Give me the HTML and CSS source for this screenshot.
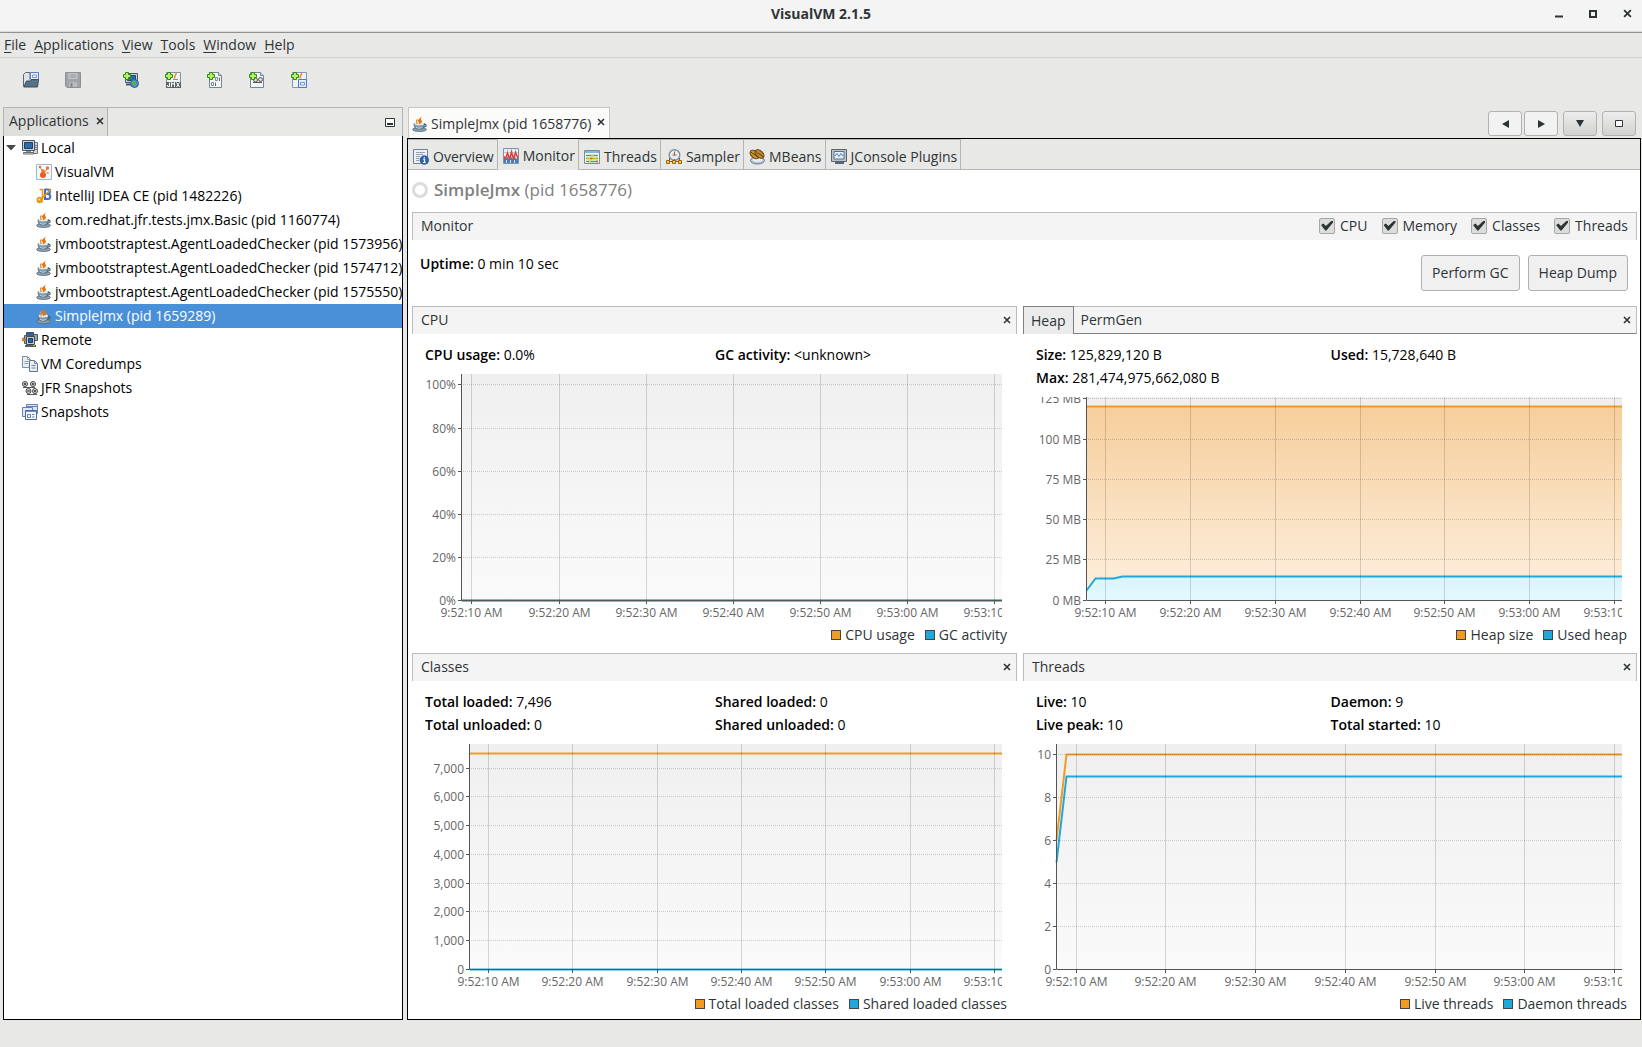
FILE: index.html
```html
<!DOCTYPE html>
<html lang="en">
<head>
<meta charset="utf-8">
<title>VisualVM 2.1.5</title>
<link rel="stylesheet" href="styles.css">
</head>
<body>
<svg class="sprite" aria-hidden="true">
  <symbol id="i-java" viewBox="0 0 16 16">
    <ellipse cx="7.500" cy="13.500" rx="7" ry="2" fill="#8fa3b1" stroke="#4d6272" stroke-width=".7"/>
    <path d="M2 7.500h10.500c0 3.500-1.500 5.500-3.200 5.500H5.200C3.500 13 2 11 2 7.500z" fill="#7f97a8" stroke="#4a5f6f" stroke-width=".8"/>
    <path d="M12 8.500c3-.8 3 2.600-.8 2.700" fill="none" stroke="#4a5f6f" stroke-width="1.200"/>
    <ellipse cx="7.200" cy="8" rx="4.900" ry="1.400" fill="#dfe8ee"/>
    <path d="M4 11c1 1.500 4 1.500 5.500.5" fill="none" stroke="#c9d8e2"/>
    <path d="M9.200 0c.6 2-3.700 3-3.200 5 .3 1 1.500 1.500 1 3.300C10.500 7 10.500 4.700 9 3.700 8.500 2.700 10 1.500 9.200 0z" fill="#e87410"/>
    <path d="M5.500 3.500C3.500 5 4.500 6.500 5.500 8" fill="none" stroke="#f08a2a" stroke-width="1.300"/>
  </symbol>
  <symbol id="i-plus" viewBox="0 0 16 16">
    <path d="M2.500.5h3v2h2v3h-2v2h-3v-2h-2v-3h2z" fill="#b4f06c" stroke="#2f8a10"/>
  </symbol>
  <symbol id="i-open" viewBox="0 0 16 16">
    <path d="M.500 14V2.500l2-2h4.500v7" fill="#dde1e5" stroke="#5b6873"/>
    <path d="M7.500.5h8v7h-8z" fill="#e8f0ff" stroke="#5a7fc4"/><path d="M9.500 3h4v2.500h-4z" fill="#fff" stroke="#6f93d6"/>
    <path d="M.700 15 3.500 9h4l1-1.500h7L14.500 15z" fill="#56728a" stroke="#3a4e60"/>
  </symbol>
  <symbol id="i-save" viewBox="0 0 16 16">
    <path d="M.5.500h15v15H2L.500 14z" fill="#a2a3a7" stroke="#8f9095"/>
    <path d="M3.500 1h9v6h-9z" fill="#c3c4c8"/><path d="M5 3h6M5 5h6" stroke="#96979c"/><path d="M4 10h8v5H4z" fill="#b9babd"/><path d="M5.500 11h2v4h-2z" fill="#85868a"/>
  </symbol>
  <symbol id="i-host" viewBox="0 0 16 16">
    <path d="M2.500 1.500h12v9h-12z" fill="#c7d0d6" stroke="#4b5861"/><path d="M4.500 3.500h8v5h-8z" fill="#2d6b9f" stroke="#1d4a74"/>
    <path d="M3 12.500h7" stroke="#4b5861" stroke-width="2"/>
    <circle cx="11.500" cy="11.500" r="4" fill="#4b8ad0" stroke="#2c5f96"/><path d="M10 8.500l3 1-1 2 1.500 1.500-2 1.500-1-2.500-2-1z" fill="#5cb53c"/>
    <use href="#i-plus"/>
  </symbol>
  <symbol id="i-jmx" viewBox="0 0 16 16">
    <path d="M1.500.5h14v15h-14z" fill="#eef2f5" stroke="#8496a6"/><path d="M11 1c1 2-3 3-1 5.500" fill="none" stroke="#ee8a1a" stroke-width="1.500"/><path d="M8 7.500h5" stroke="#7f95a6"/>
    <path d="M1 10h15v6H1z" fill="#5c6166"/>
    <path d="M4.500 10.500v4h-2V13M6.500 15v-4.500l1.500 2 1.500-2V15M11.500 10.500l3 4.500M14.500 10.500l-3 4.500" fill="none" stroke="#fff"/>
    <use href="#i-plus"/>
  </symbol>
  <symbol id="i-core" viewBox="0 0 16 16">
    <path d="M2.500.5h9l3 3v12h-12z" fill="#f3f5f7" stroke="#74879a"/><path d="M11.500.5v3h3" fill="#cdd7e0" stroke="#74879a"/>
    <path d="M8.500 10.500v3.500M12.500 5.500v3.500" stroke="#5c6a76"/><path d="M4.500 10.500h2v3h-2zM8.500 5.500h2v3h-2z" fill="none" stroke="#7d8b98"/>
    <use href="#i-plus"/>
  </symbol>
  <symbol id="i-jfr" viewBox="0 0 16 16">
    <path d="M1.500.5h10l3 3v12h-13z" fill="#f3f5f7" stroke="#74879a"/><path d="M11.500.5v3h3" fill="#cdd7e0" stroke="#74879a"/>
    <circle cx="6.500" cy="8" r="2" fill="#ddd" stroke="#555"/><circle cx="11.500" cy="7.500" r="2" fill="#ddd" stroke="#555"/><path d="M4 10.500h9" stroke="#555"/>
    <use href="#i-plus"/>
  </symbol>
  <symbol id="i-snapadd" viewBox="0 0 16 16">
    <path d="M1.500.5h14v15h-14z" fill="#eef2f7" stroke="#8496b6"/><path d="M10.500 1c1 2-3 3-1 5.500" fill="none" stroke="#ee8a1a" stroke-width="1.500"/>
    <path d="M7.500 7.500h8v8h-8z" fill="#e6efff" stroke="#4f79c6"/><path d="M9.500 10.500h4v2.500h-4z" fill="#fff" stroke="#6f93d6"/>
    <use href="#i-plus"/>
  </symbol>
  <symbol id="i-local" viewBox="0 0 16 16">
    <path d="M11.500 2.500h4v11h-4z" fill="#d9dcde" stroke="#6d7479"/><path d="M13 5.500h2M13 7.500h2M13 9.500h2" stroke="#777"/>
    <path d="M.5.500h12v10H.5z" fill="#cfd4d8" stroke="#4b5359"/><path d="M2.500 2.500h8v6h-8z" fill="#2c6ca8" stroke="#173f69"/>
    <path d="M4 11h5v2H4z" fill="#8b9399"/><path d="M1.500 12.500h10v1.500h-10z" fill="#e5e7e8" stroke="#666d72"/>
  </symbol>
  <symbol id="i-vvm" viewBox="0 0 16 16">
    <path d="M.5.500h15v15H.500z" fill="#f4f8fb" stroke="#9bb8cd"/>
    <circle cx="4" cy="3" r="1.300" fill="#f2702a"/><circle cx="11.500" cy="4" r="1.700" fill="#f2702a"/><circle cx="7" cy="11" r="3" fill="#ee5a1c"/><circle cx="7" cy="7" r="1.800" fill="#f2702a"/>
    <path d="M4.500 4 8 9l3-4" fill="none" stroke="#f2702a"/><path d="M10 8.500l2.500 1" stroke="#f7a070"/><circle cx="12" cy="9" r=".9" fill="#f7a070"/>
  </symbol>
  <symbol id="i-idea" viewBox="0 0 16 16">
    <path d="M8.500 1.500h3.500c2.500 0 2.500 4.500 0 4.500 3 0 3 5 0 5H8.500M8.500 6h4" fill="none" stroke="#4070c4" stroke-width="2"/><path d="M9 1v11" stroke="#4070c4" stroke-width="2"/>
    <path d="M3.500 1.500h3v10M15 1 2 14.500" fill="none" stroke="#e8960c" stroke-width="1.500"/><circle cx="3.800" cy="12" r="2.300" fill="none" stroke="#e8960c" stroke-width="1.800"/>
  </symbol>
  <symbol id="i-remote" viewBox="0 0 16 16">
    <path d="M4.500.500h7v4h-7z" fill="#2d659d" stroke="#474f57"/><path d="M11.500 2.500h4v6h-4zM2.500 3.500h3v8h-3z" fill="#9da5ab" stroke="#51595f"/>
    <path d="M4.500 4.500h8v8h-8z" fill="#c6ccd0" stroke="#424a50"/><path d="M6.500 6.500h4v4h-4z" fill="#2468a6" stroke="#123d68"/>
    <path d="M3 14h11" stroke="#565e64" stroke-width="2"/><path d="M11 13.500h2" stroke="#7ed321"/><circle cx="1.700" cy="7.500" r="1.500" fill="#e09620" stroke="#80500a" stroke-width=".7"/>
  </symbol>
  <symbol id="i-dumps" viewBox="0 0 16 16">
    <path d="M.5.500h5l3 3v8h-8z" fill="#e6edf3" stroke="#7d90a2"/><path d="M5.500.500v3h3M2.500 5.500h4M2.500 7.500h4" fill="none" stroke="#8ea1b2"/>
    <path d="M7.500 4.500h5l3 3v8h-8z" fill="#e6edf3" stroke="#60758a"/><path d="M12.500 4.500v3h3M9.500 9.500h4M9.500 12h4" fill="none" stroke="#75899b"/>
  </symbol>
  <symbol id="i-reels" viewBox="0 0 16 16">
    <g fill="#d6d6d6" stroke="#444"><circle cx="3" cy="4" r="2.500"/><circle cx="11" cy="4" r="2.500"/><circle cx="6.500" cy="11" r="2.500"/><circle cx="13" cy="11" r="2.500"/></g>
    <path d="M2 3l2 2M4 3 2 5M10 3l2 2M12 3l-2 2M5.500 10l2 2M7.500 10l-2 2M12 10l2 2M14 10l-2 2M1 7.500h12M5 14.500h10" stroke="#444" stroke-width=".9"/>
  </symbol>
  <symbol id="i-snaps" viewBox="0 0 16 16">
    <path d="M4.500.500h11v9h-11z" fill="#dfe8fa" stroke="#6480b8"/><path d="M5 2.500h10" stroke="#6480b8"/><path d="M.5 3.500h10v9H.500z" fill="#dfe8fa" stroke="#6480b8"/>
    <path d="M3.500 6.500h11v9h-11z" fill="#f3f7ff" stroke="#4c69a4"/><path d="M4 7.500h10" stroke="#6f8fce"/><path d="M5.500 10.500h3v3h-3zM10 10.500h2.500M10 13h2.500" fill="none" stroke="#6480b8"/>
  </symbol>
  <symbol id="i-overview" viewBox="0 0 16 16">
    <path d="M.5.500h14v14H.500z" fill="#edf1f5" stroke="#6f8192"/><path d="M3 3.500h9M3 5.500h7M3 7.500h4M3 9.500h3M3 11.500h3" stroke="#8fa0af"/>
    <circle cx="11.300" cy="11" r="4.300" fill="#2f62b4" stroke="#1e4488" stroke-width=".7"/><path d="M11.300 8v1.400M10.300 10.500h1.200v3M10 13.500h2.700" stroke="#fff" stroke-width="1.200" fill="none"/>
  </symbol>
  <symbol id="i-monitor" viewBox="0 0 16 16">
    <path d="M.5.500h15v15H.500z" fill="#e4eff8" stroke="#8094a5"/><path d="M4.500 1v14M8.500 1v14M12.500 1v14M1 4.500h14" stroke="#b5ccdd"/>
    <path d="M1 9l2 2 1.500-2L6 11l2-2 2 2 1.500-2L13 11l2-2v6H1z" fill="#3f7fc8"/>
    <path d="M1 8.500l1.500 2.500 2-6 2 6L8.500 4l2 7 2-6.500L15 10" fill="none" stroke="#e2402f" stroke-width="1.500"/>
    <path d="M3.500 12v3M7.500 12v3M11.500 12v3" stroke="#cfe2f3"/>
  </symbol>
  <symbol id="i-threads" viewBox="0 0 16 16">
    <path d="M.5 1.500h15v13H.500z" fill="#f6fafc" stroke="#77899a"/><path d="M1 3h14" stroke="#80b6dd" stroke-width="2"/>
    <path d="M2 6.500h12M2 9.500h12M2 12.500h12" stroke="#55a845" stroke-width="1.500"/><path d="M7 6.500h3M3 9.500h3M9 9.500h4M5 12.500h2" stroke="#f0b030" stroke-width="1.500"/><path d="M6 9.500h2M12 12.500h2" stroke="#e0562e" stroke-width="1.500"/>
  </symbol>
  <symbol id="i-sampler" viewBox="0 0 16 16">
    <circle cx="8.500" cy="6" r="5.300" fill="#e3eef8" stroke="#7d8fa0" stroke-width="1.400"/><path d="M8.500 2.500v4M6.500 6h4" fill="none" stroke="#c4571b"/>
    <path d="M2 12.500h13M8.500 10v2M3.500 9v3M13.500 9v3" stroke="#8a5d12"/><path d="M.5 11.500h3v3h-3zM6.500 11.500h3v3h-3zM12.500 11.500h3v3h-3z" fill="#ffca4a" stroke="#9a6510"/>
  </symbol>
  <symbol id="i-mbeans" viewBox="0 0 16 16">
    <ellipse cx="8.500" cy="11.500" rx="7" ry="3.500" fill="#b9c7d2" stroke="#66798a"/><ellipse cx="8.500" cy="10.800" rx="5" ry="2" fill="#e9eff3"/>
    <ellipse cx="5.500" cy="5.500" rx="3.300" ry="5.200" transform="rotate(-48 5.500 5.500)" fill="#c89434" stroke="#5a3c0c"/><ellipse cx="10.500" cy="5" rx="3.300" ry="5.200" transform="rotate(-48 10.500 5)" fill="#c08a2a" stroke="#5a3c0c"/>
    <path d="M2 3c2 3 5 2 7 5.500M7 2.500c2 3 5 2 7 5.500" fill="none" stroke="#5a3c0c"/>
  </symbol>
  <symbol id="i-console" viewBox="0 0 16 16">
    <path d="M.5.500h15v12H.500z" fill="#b8c2ca" stroke="#58656f"/><path d="M3 2.500h10v7.500H3z" fill="#e3f0f8" stroke="#60717e"/><path d="M4 7l2-2.500L8 7.500l2-3 2 2.500" fill="none" stroke="#4d83b4"/>
    <path d="M4 14h9" stroke="#58656f" stroke-width="2"/>
  </symbol>
  <symbol id="i-close" viewBox="0 0 8 8"><path d="M1 1l6 6M7 1 1 7" stroke="currentColor" stroke-width="1.600"/></symbol>
</svg>

<header class="titlebar">
  <h1 class="titlebar-text">VisualVM 2.1.5</h1>
  <div class="window-controls">
    <button type="button" aria-label="Minimize"><svg width="8" height="8"><path d="M0 6.500h8" stroke="currentColor" stroke-width="2"/></svg></button>
    <button type="button" aria-label="Maximize"><svg width="8" height="8"><path d="M1 1h6v6H1z" fill="none" stroke="currentColor" stroke-width="2"/></svg></button>
    <button type="button" aria-label="Close"><svg width="9" height="9"><use href="#i-close"/></svg></button>
  </div>
</header>

<nav class="menubar" aria-label="Main menu">
  <a href="#file"><u>F</u>ile</a>
  <a href="#applications"><u>A</u>pplications</a>
  <a href="#view"><u>V</u>iew</a>
  <a href="#tools"><u>T</u>ools</a>
  <a href="#window"><u>W</u>indow</a>
  <a href="#help"><u>H</u>elp</a>
</nav>

<div class="toolbar">
  <div class="toolgroup">
    <button type="button" aria-label="Open file"><svg class="icon"><use href="#i-open"/></svg></button>
    <button type="button" aria-label="Save" disabled><svg class="icon"><use href="#i-save"/></svg></button>
  </div>
  <div class="toolgroup">
    <button type="button" aria-label="Add remote host"><svg class="icon"><use href="#i-host"/></svg></button>
    <button type="button" aria-label="Add JMX connection"><svg class="icon"><use href="#i-jmx"/></svg></button>
    <button type="button" aria-label="Add VM coredump"><svg class="icon"><use href="#i-core"/></svg></button>
    <button type="button" aria-label="Add JFR snapshot"><svg class="icon"><use href="#i-jfr"/></svg></button>
    <button type="button" aria-label="Add snapshot"><svg class="icon"><use href="#i-snapadd"/></svg></button>
  </div>
</div>

<div class="workspace">
  <aside class="sidebar">
    <div class="side-head">
      <div class="side-tab">Applications <button type="button" class="close" aria-label="Close Applications"><svg><use href="#i-close"/></svg></button></div>
      <button type="button" class="minimize" aria-label="Minimize window group"><svg width="10" height="9"><path d="M.5.500h9v8h-9z" fill="#fff" stroke="currentColor"/><path d="M2 6h6" stroke="currentColor" stroke-width="2"/></svg></button>
    </div>
    <ul class="tree">
      <li><span class="row"><svg class="arrow" width="10" height="6"><path d="M0 0h10L5 5.500z" fill="#4a4a4a"/></svg><svg class="icon"><use href="#i-local"/></svg>Local</span>
        <ul>
          <li><span class="row"><svg class="icon"><use href="#i-vvm"/></svg>VisualVM</span></li>
          <li><span class="row"><svg class="icon"><use href="#i-idea"/></svg>IntelliJ IDEA CE (pid 1482226)</span></li>
          <li><span class="row"><svg class="icon"><use href="#i-java"/></svg>com.redhat.jfr.tests.jmx.Basic (pid 1160774)</span></li>
          <li><span class="row"><svg class="icon"><use href="#i-java"/></svg>jvmbootstraptest.AgentLoadedChecker (pid 1573956)</span></li>
          <li><span class="row"><svg class="icon"><use href="#i-java"/></svg>jvmbootstraptest.AgentLoadedChecker (pid 1574712)</span></li>
          <li><span class="row"><svg class="icon"><use href="#i-java"/></svg>jvmbootstraptest.AgentLoadedChecker (pid 1575550)</span></li>
          <li><span class="row selected"><svg class="icon"><use href="#i-java"/></svg>SimpleJmx (pid 1659289)</span></li>
        </ul>
      </li>
      <li><span class="row"><svg class="icon"><use href="#i-remote"/></svg>Remote</span></li>
      <li><span class="row"><svg class="icon"><use href="#i-dumps"/></svg>VM Coredumps</span></li>
      <li><span class="row"><svg class="icon"><use href="#i-reels"/></svg>JFR Snapshots</span></li>
      <li><span class="row"><svg class="icon"><use href="#i-snaps"/></svg>Snapshots</span></li>
    </ul>
  </aside>

  <main class="document">
    <div class="doc-head">
      <div class="doc-tab"><svg class="icon"><use href="#i-java"/></svg>SimpleJmx (pid 1658776) <button type="button" class="close" aria-label="Close SimpleJmx"><svg><use href="#i-close"/></svg></button></div>
      <div class="doc-nav">
        <button type="button" class="flat" aria-label="Previous"><svg width="7" height="8"><path d="M7 0v8L0 4z" fill="currentColor"/></svg></button>
        <button type="button" class="flat" aria-label="Next"><svg width="7" height="8"><path d="M0 0v8l7-4z" fill="currentColor"/></svg></button>
        <button type="button" class="list" aria-label="Show opened documents"><svg width="8" height="7"><path d="M0 0h8L4 7z" fill="currentColor"/></svg></button>
        <button type="button" class="list" aria-label="Maximize window"><svg width="8" height="7"><path d="M.5.500h7v6h-7z" fill="#fff" stroke="currentColor"/></svg></button>
      </div>
    </div>

    <div class="doc-body">
      <nav class="views" aria-label="Views">
        <button type="button"><svg class="icon"><use href="#i-overview"/></svg>Overview</button>
        <button type="button" class="active"><svg class="icon"><use href="#i-monitor"/></svg>Monitor</button>
        <button type="button"><svg class="icon"><use href="#i-threads"/></svg>Threads</button>
        <button type="button"><svg class="icon"><use href="#i-sampler"/></svg>Sampler</button>
        <button type="button"><svg class="icon"><use href="#i-mbeans"/></svg>MBeans</button>
        <button type="button"><svg class="icon"><use href="#i-console"/></svg>JConsole Plugins</button>
      </nav>

      <h2 class="app-title"><span class="ring"></span><span><b>SimpleJmx</b> (pid 1658776)</span></h2>

      <div class="content">
        <div class="bar">
          <span class="bar-title">Monitor</span>
          <div class="checks">
            <label><input type="checkbox" checked>CPU</label>
            <label><input type="checkbox" checked>Memory</label>
            <label><input type="checkbox" checked>Classes</label>
            <label><input type="checkbox" checked>Threads</label>
          </div>
        </div>
        <div class="summary">
          <p class="uptime"><b>Uptime:</b> 0 min 10 sec</p>
          <div class="actions">
            <button type="button">Perform GC</button>
            <button type="button">Heap Dump</button>
          </div>
        </div>

        <div class="panels">
          <section class="panel">
            <div class="bar"><h3 class="bar-title">CPU</h3><button type="button" class="close" aria-label="Hide CPU"><svg><use href="#i-close"/></svg></button></div>
            <div class="stats"><span><b>CPU usage:</b> 0.0%</span><span><b>GC activity:</b> &lt;unknown&gt;</span></div>
            <svg class="chart" data-chart="cpu" role="img" aria-label="CPU usage and GC activity"></svg>
            <div class="legend"><span class="key orange">CPU usage</span><span class="key blue">GC activity</span></div>
          </section>
          <section class="panel">
            <div class="bar tabbed"><button type="button" class="mini-tab active">Heap</button><button type="button" class="mini-tab">PermGen</button><button type="button" class="close" aria-label="Hide Memory"><svg><use href="#i-close"/></svg></button></div>
            <div class="stats"><span><b>Size:</b> 125,829,120 B</span><span><b>Used:</b> 15,728,640 B</span><span><b>Max:</b> 281,474,975,662,080 B</span></div>
            <svg class="chart" data-chart="heap" role="img" aria-label="Heap size and used heap"></svg>
            <div class="legend"><span class="key orange">Heap size</span><span class="key blue">Used heap</span></div>
          </section>
          <section class="panel">
            <div class="bar"><h3 class="bar-title">Classes</h3><button type="button" class="close" aria-label="Hide Classes"><svg><use href="#i-close"/></svg></button></div>
            <div class="stats"><span><b>Total loaded:</b> 7,496</span><span><b>Shared loaded:</b> 0</span><span><b>Total unloaded:</b> 0</span><span><b>Shared unloaded:</b> 0</span></div>
            <svg class="chart" data-chart="classes" role="img" aria-label="Total and shared loaded classes"></svg>
            <div class="legend"><span class="key orange">Total loaded classes</span><span class="key blue">Shared loaded classes</span></div>
          </section>
          <section class="panel">
            <div class="bar"><h3 class="bar-title">Threads</h3><button type="button" class="close" aria-label="Hide Threads"><svg><use href="#i-close"/></svg></button></div>
            <div class="stats"><span><b>Live:</b> 10</span><span><b>Daemon:</b> 9</span><span><b>Live peak:</b> 10</span><span><b>Total started:</b> 10</span></div>
            <svg class="chart" data-chart="threads" role="img" aria-label="Live and daemon threads"></svg>
            <div class="legend"><span class="key orange">Live threads</span><span class="key blue">Daemon threads</span></div>
          </section>
        </div>
      </div>
    </div>
  </main>
</div>
<footer class="statusbar"></footer>
<script src="charts.js"></script>
</body>
</html>
```
FILE: styles.css
```css
*, *::before { box-sizing: border-box; }

body {
  margin: 0;
  min-height: 100vh;
  display: flex;
  flex-direction: column;
  background: #e8e8e6;
  color: #2e3436;
  font: 14px/20px "Open Sans", "Noto Sans", sans-serif;
}

h1, h2, h3, p, ul { margin: 0; padding: 0; font: inherit; }
ul { list-style: none; }
button {
  font: inherit;
  color: inherit;
  margin: 0;
  padding: 0;
  border: 0;
  background: none;
  display: inline-flex;
  align-items: center;
  justify-content: center;
}
b { font-weight: 600; }
svg { display: block; flex: none; }
.sprite { position: absolute; width: 0; height: 0; }
.icon { width: 16px; height: 16px; }
.close svg { width: 8px; height: 8px; }

/* Window frame */
.titlebar {
  display: grid;
  grid-template-columns: 1fr auto 1fr;
  align-items: center;
  height: 33px;
  padding-bottom: 5px;
  background: #f4f4f4;
  border-bottom: 1px solid #90908c;
  box-shadow: inset 0 -1px #dcdcda;
}
.titlebar-text { grid-column: 2; font-weight: 700; }
.window-controls { display: flex; justify-content: flex-end; gap: 26px; padding-right: 10px; }

.menubar {
  display: flex;
  gap: 8px;
  height: 25px;
  padding: 2px 4px;
  border-bottom: 1px solid #d0d0ce;
}
.menubar a { color: inherit; text-decoration: none; }
.menubar u { text-underline-offset: 2px; }

.toolbar { display: flex; gap: 16px; height: 49px; padding: 0 10px 5px; }
.toolgroup { display: flex; }
.toolgroup button { width: 42px; }

.workspace {
  flex: 1;
  display: grid;
  grid-template-columns: 400px minmax(0, 1fr);
  gap: 4px;
  padding: 0 1px 0 3px;
}
.statusbar { height: 27px; }

/* Applications tree */
.sidebar { display: flex; flex-direction: column; }
.side-head {
  display: flex;
  justify-content: space-between;
  height: 29px;
  border: 1px solid #b4b4b2;
  border-width: 1px 1px 0;
}
.side-tab {
  display: flex;
  gap: 7px;
  align-items: center;
  padding: 0 3px 3px 5px;
  background: #dededc;
  border-right: 1px solid #b0b0ae;
}
.minimize { margin-right: 7px; }
.tree {
  flex: 1;
  background: #fff;
  color: #000;
  border: 1px solid #000;
  border-top: 0;
}
.tree .row {
  display: flex;
  align-items: center;
  gap: 3px;
  height: 24px;
  padding-left: 18px;
  white-space: nowrap;
}
.tree ul .row { padding-left: 32px; }
.tree .row:has(.arrow) { padding-left: 2px; }
.arrow { margin-right: 3px; }
.tree .selected { background: #4a90d9; color: #fff; }

/* Document area */
.document { display: flex; flex-direction: column; }
.doc-head { display: flex; justify-content: space-between; height: 31px; }
.doc-tab {
  display: flex;
  align-items: center;
  gap: 3px;
  margin-left: 1px;
  padding: 2px 4px 0 3px;
  background: #fbfbfa;
  border: 1px solid #c6c6c4;
  border-bottom: 0;
}
.doc-tab .close { align-self: flex-start; margin: 8px 0 0 3px; }
.doc-nav { display: flex; gap: 2px; padding: 4px 5px 2px 0; }
.doc-nav button {
  width: 34px;
  border: 1px solid #b2b2b0;
  border-radius: 3px;
}
.doc-nav .flat { background: #f2f2f2; }
.doc-nav .list { margin-left: 3px; background: linear-gradient(#ededed, #d2d2d0); }

.doc-body {
  flex: 1;
  display: flex;
  flex-direction: column;
  background: #fff;
  border: 1px solid #000;
}
.views {
  display: flex;
  height: 31px;
  background: #e8e8e6;
  border-bottom: 1px solid #b4b4b2;
}
.views button {
  gap: 4px;
  padding: 5px 3px 0 5px;
  border: 1px solid #b4b4b2;
  border-width: 1px 1px 0 0;
}
.views .active { padding-top: 2px; border-top-color: #e8e8e6; margin-bottom: -1px; background: #e8e8e6; }

.app-title {
  display: flex;
  align-items: center;
  gap: 6px;
  height: 42px;
  padding: 0 0 2px 4px;
  color: #808080;
  font-size: 17px;
}
.ring { width: 16px; height: 16px; border: 3px solid #dcdce0; border-radius: 50%; }

.content { flex: 1; display: flex; flex-direction: column; padding: 0 3px 5px 4px; }
.bar {
  display: flex;
  align-items: center;
  justify-content: space-between;
  height: 28px;
  padding: 0 5px 2px 8px;
  background: #f4f4f4;
  border: 1px solid #bcbcbc;
  border-bottom: 0;
}
.checks { display: flex; gap: 14px; padding-right: 3px; }
.checks label { display: flex; align-items: center; gap: 5px; }
.checks input {
  appearance: none;
  display: grid;
  place-items: center;
  width: 16px;
  height: 16px;
  margin: 0;
  border: 1px solid #a6a6a4;
  border-radius: 2px;
  background: #dcdcda;
}
.checks input:checked::before {
  content: "";
  width: 12px;
  height: 10px;
  background: #2e3436;
  clip-path: polygon(0 45%, 20% 30%, 40% 55%, 90% 0, 100% 0, 100% 20%, 45% 100%, 35% 100%);
}

.summary { display: flex; justify-content: space-between; height: 66px; padding: 14px 9px 0 8px; color: #000; }
.actions { display: flex; gap: 8px; padding-top: 1px; color: #2e3436; }
.actions button {
  height: 36px;
  padding: 0 10px;
  background: #f0f0f0;
  border: 1px solid #b0b0b0;
  border-radius: 3px;
}

.panels {
  flex: 1;
  display: grid;
  grid-template-columns: 605fr 614fr;
  grid-template-rows: 339fr 360fr;
  gap: 8px 6px;
}
.panel { display: flex; flex-direction: column; min-width: 0; }
.tabbed { align-items: stretch; justify-content: flex-start; padding: 0 5px 0 0; border-bottom: 1px solid #808080; }
.tabbed .close { margin-left: auto; }
.mini-tab { padding: 0 7px; }
.mini-tab.active { margin: -1px 0 -1px -1px; background: #ebebeb; border: 1px solid #808080; border-bottom: 0; }

.stats {
  display: grid;
  grid-template-columns: 1fr 1fr;
  padding: 9px 12px 8px 13px;
  color: #000;
  line-height: 23px;
}
.chart {
  flex: 1 0 160px;
  width: calc(100% - 15px);
  height: 0;
  overflow: hidden;
  font-size: 12px;
}
.legend { display: flex; justify-content: flex-end; gap: 10px; padding-right: 10px; }
.key { display: flex; align-items: center; gap: 4px; }
.key::before { content: ""; width: 10px; height: 10px; border: 1px solid #444; background: #f29b24; }
.key.blue::before { background: #20a8da; }

/* Chart drawing */
.grid-x { stroke: rgba(0, 0, 0, .15); }
.grid-y { stroke: rgba(0, 0, 0, .18); stroke-dasharray: 1 1; }
.axis { stroke: #555; }
.tick-label { fill: #666; }
.line { fill: none; stroke-width: 2; }
```
FILE: charts.js
```js
const NS = "http://www.w3.org/2000/svg";
const ORANGE = "#f29b24";
const BLUE = "#20a8da";
const TIMES = ["9:52:10 AM", "9:52:20 AM", "9:52:30 AM", "9:52:40 AM", "9:52:50 AM", "9:53:00 AM", "9:53:10 AM"];
const END = 70.9; // seconds after 9:52:00
const AXIS_HEIGHT = 25;

const charts = {
  cpu: {
    left: 49, start: 8.8, max: 105, step: 20, format: v => v + "%",
    series: [{ color: ORANGE, points: [[8.8, 0], [END, 0]] }, { color: BLUE, points: [[8.8, 0], [END, 0]] }]
  },
  heap: {
    left: 63, start: 7.8, max: 126, step: 25, format: v => v + " MB",
    series: [
      { color: ORANGE, fill: ["#f6ce9b", "#fdf0e0"], points: [[7.8, 120], [END, 120]] },
      { color: BLUE, fill: ["#daf4fd", "#e2f8ff"], points: [[7.8, 6], [8.9, 13.5], [11, 13.5], [12, 15], [END, 15]] }
    ]
  },
  classes: {
    left: 57, start: 7.8, max: 7836, step: 1000, format: v => v.toLocaleString("en-US"),
    series: [{ color: ORANGE, points: [[7.8, 7496], [END, 7496]] }, { color: BLUE, points: [[7.8, 0], [END, 0]] }]
  },
  threads: {
    left: 33, start: 7.8, max: 10.5, step: 2, format: v => String(v),
    series: [{ color: ORANGE, points: [[7.8, 6], [8.9, 10], [END, 10]] }, { color: BLUE, points: [[7.8, 5], [8.9, 9], [END, 9]] }]
  }
};

function add(parent, name, attrs, text) {
  const el = document.createElementNS(NS, name);
  for (const key in attrs) el.setAttribute(key, attrs[key]);
  if (text) el.textContent = text;
  parent.appendChild(el);
  return el;
}

function gradient(svg, id, colors) {
  const g = add(svg, "linearGradient", { id, x1: 0, y1: 0, x2: 0, y2: 1 });
  add(g, "stop", { offset: 0, "stop-color": colors[0] });
  add(g, "stop", { offset: 1, "stop-color": colors[1] });
  return `url(#${id})`;
}

function draw(svg) {
  const name = svg.dataset.chart;
  const c = charts[name];
  const width = svg.clientWidth;
  const bottom = svg.clientHeight - AXIS_HEIGHT;
  const x = s => Math.round(c.left + (s - c.start) / (END - c.start) * (width - c.left)) + 0.5;
  const y = v => Math.floor(bottom - v / c.max * bottom + 0.2) + 0.5;
  svg.replaceChildren();

  add(svg, "rect", { x: c.left, y: 0, width: width - c.left, height: bottom, fill: gradient(svg, name + "-bg", ["#efefef", "#fafafa"]) });

  c.series.forEach((s, i) => {
    const pts = s.points.map(p => [x(p[0]), y(p[1])]);
    const path = pts.map(p => p.join(" ")).join("L");
    if (s.fill) add(svg, "path", { d: `M${path}V${bottom}H${pts[0][0]}Z`, fill: gradient(svg, name + i, s.fill) });
    add(svg, "path", { class: "line", d: "M" + path, stroke: s.color });
  });

  TIMES.forEach((label, i) => {
    const tx = x(10 + i * 10);
    add(svg, "path", { class: "grid-x", d: `M${tx} 0V${bottom}` });
    add(svg, "path", { class: "axis", d: `M${tx} ${bottom}v4` });
    add(svg, "text", { class: "tick-label", x: tx, y: bottom + 17, "text-anchor": "middle" }, label);
  });
  for (let v = 0; v <= c.max; v += c.step) {
    if (v) add(svg, "path", { class: "grid-y", d: `M${c.left} ${y(v)}H${width}` });
    add(svg, "path", { class: "axis", d: `M${c.left - 3} ${y(v)}h3` });
    add(svg, "text", { class: "tick-label", x: c.left - 5, y: y(v) + 4, "text-anchor": "end" }, c.format(v));
  }
  add(svg, "path", { class: "axis", fill: "none", d: `M${c.left + 0.5} 0V${bottom + 0.5}H${width}` });
}

const resize = new ResizeObserver(entries => entries.forEach(e => draw(e.target)));
document.querySelectorAll(".chart").forEach(svg => { draw(svg); resize.observe(svg); });
```
